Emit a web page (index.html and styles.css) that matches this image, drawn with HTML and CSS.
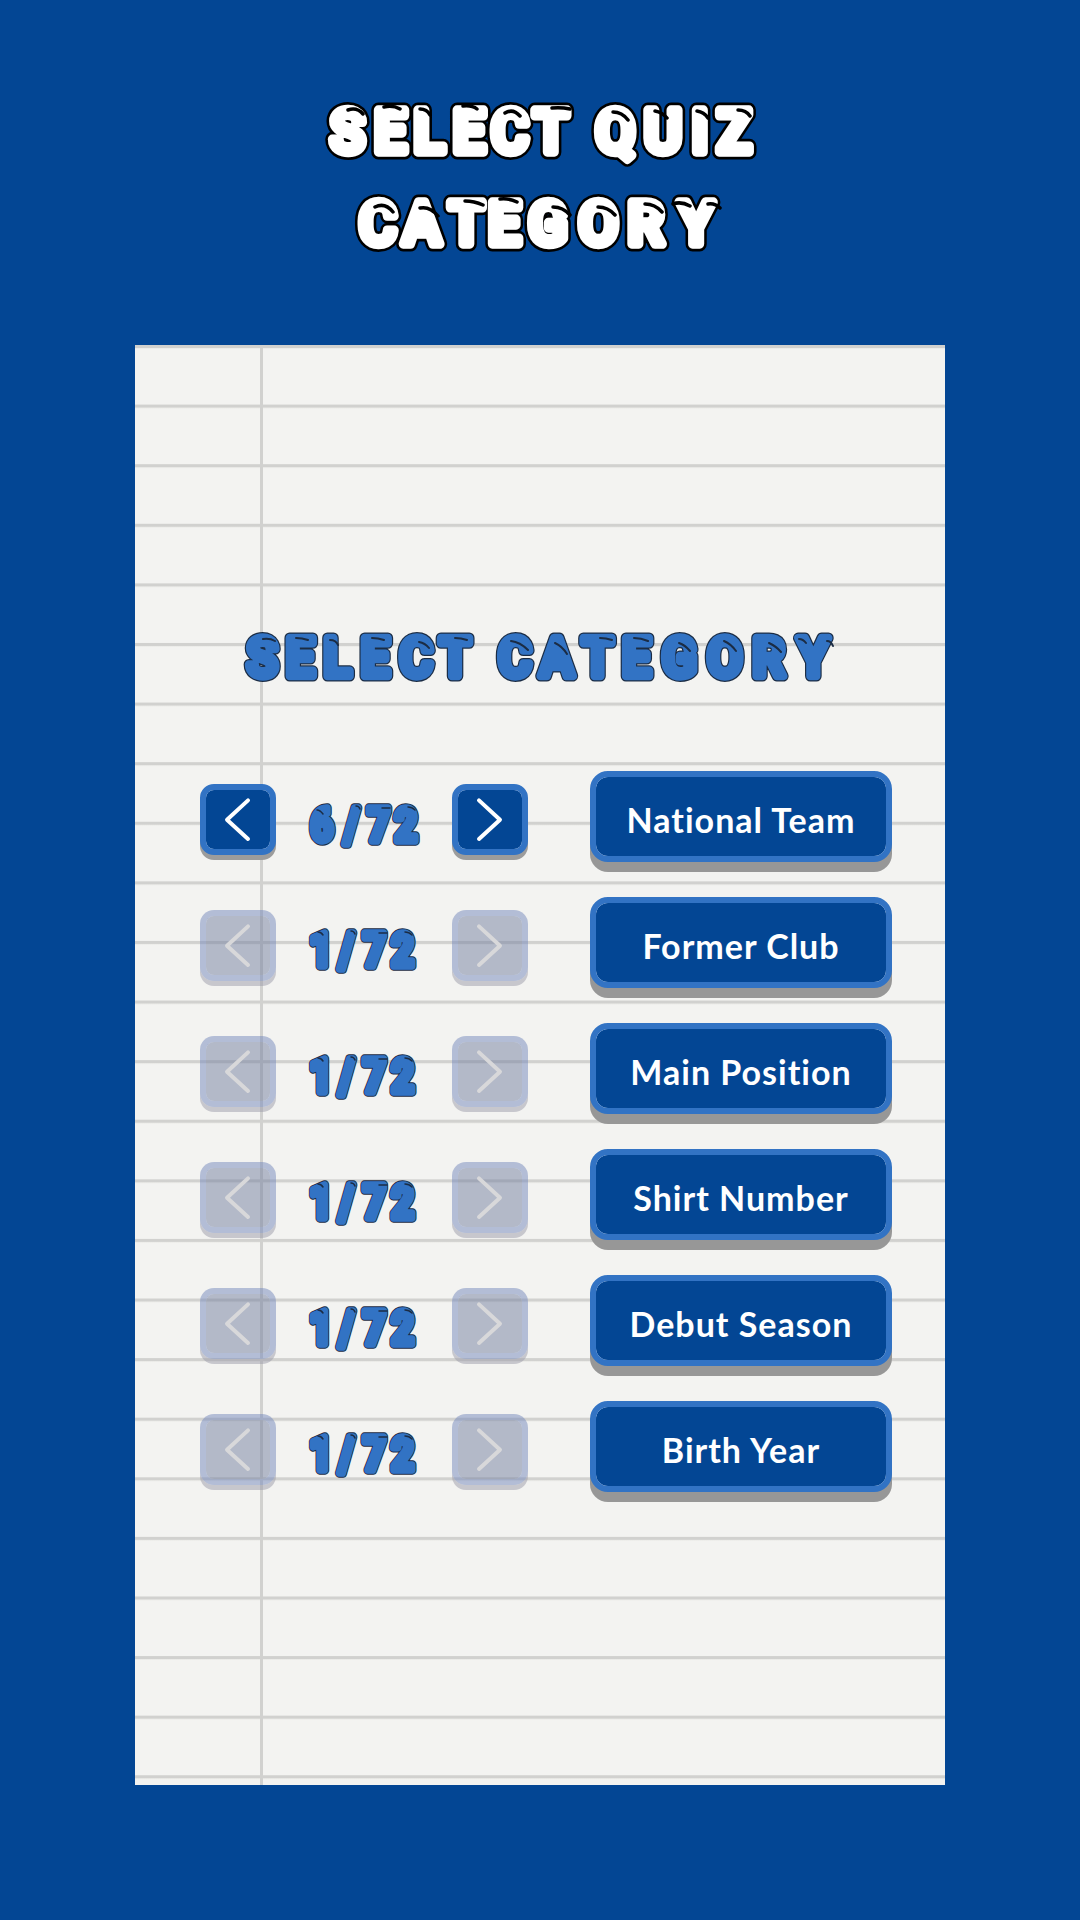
FILE: index.html
```html
<!DOCTYPE html>
<html lang="en">
<head>
<meta charset="utf-8">
<title>Select Quiz Category</title>
<link rel="stylesheet" href="styles.css">
</head>
<body>
<header class="top">
  <svg class="bubble title-svg" width="480" height="190" viewBox="0 0 480 190" aria-label="Select quiz category">
    <defs>
      <g id="title-text">
        <text class="scaled" x="50 95 136 178 221 264 298 332 382 421 457" y="72">SELECT QUIZ</text>
        <text class="scaled" x="82 128 175 215 261 314 364 417" y="164">CATEGORY</text>
      </g>
    </defs>
    <use href="#title-text" class="white-out"/>
    <use href="#title-text" class="white-in"/>
    <path class="gloss-title" d="M48 30q9-3 15 4M84 27q9-2 16 2M120 29q7 0 10 6M163 26q9-1 14 3M205 33q8-5 15 3M252 28q9-1 18 1M313 32q9 0 15 8M355 31q7 1 12 7M397 31q7 1 11 7M438 30q8 0 12 6M75 127q10-5 18 5M120 128q10-2 18 8M165 121q9 0 18 4M200 119q9-1 17 3M253 127q10 0 17 8M298 127q10 0 17 8M345 124q10 0 17 8M373 124q8-3 17 2M408 124q7-1 12 4"/>
  </svg>
</header>
<main class="paper">
  <svg class="bubble section-svg" width="630" height="90" viewBox="0 0 630 90" aria-label="Select category">
    <defs>
      <text id="section-text" class="scaled" x="34 74 113 153 196 237 269 300 344 387 428 473 521 567 614" y="66">SELECT CATEGORY</text>
    </defs>
    <use href="#section-text" class="blue-out"/>
    <use href="#section-text" class="blue-in"/>
    <path class="gloss-section" d="M33 29q7-1 12 2M66 28q6 0 12 2M100 30q6 0 8 5M142 28q6 0 12 2M189 32q6 1 10 6M225 28q6 0 12 2M281 31q9 1 17 9M325 33q7 3 12 11M370 28q6 0 12 2M404 28q7 0 14 3M449 33q6 2 11 8M494 31q7 3 12 10M539 33q7 3 12 9M569 29q4 0 7 4M597 31q4 0 6 5"/>
  </svg>
  <div class="rows">
    <div class="row">
      <button class="arrow"><svg width="64" height="59" viewBox="0 0 64 59"><path d="M42 10.4 21 29.7 42 49"/></svg></button>
      <svg class="bubble counter" width="120" height="60" viewBox="0 0 120 60">
        <defs><text id="c1" class="tight" x="21 56 88 120" y="48">6/72</text></defs>
        <use href="#c1" class="num-out"/><use href="#c1" class="num-in"/>
        <path class="gloss-num" d="M13 17q3 0 6 4M52 13q3 0 4 3M78 15h8M104 14q4 0 7 3"/>
      </svg>
      <button class="arrow"><svg width="64" height="59" viewBox="0 0 64 59"><path d="M21 10.4 42 29.7 21 49"/></svg></button>
      <button class="choice">National Team</button>
    </div>
    <div class="row">
      <button class="arrow off"><svg width="64" height="59" viewBox="0 0 64 59"><path d="M42 10.4 21 29.7 42 49"/></svg></button>
      <svg class="bubble counter" width="120" height="60" viewBox="0 0 120 60">
        <defs><text id="c2" class="tight" x="20 50 83 116" y="47">1/72</text></defs>
        <use href="#c2" class="num-out"/><use href="#c2" class="num-in"/>
        <path class="gloss-num" d="M14 13q3 0 5 3M47 12q3 0 4 3M75 14h8M101 13q4 0 7 3"/>
      </svg>
      <button class="arrow off"><svg width="64" height="59" viewBox="0 0 64 59"><path d="M21 10.4 42 29.7 21 49"/></svg></button>
      <button class="choice">Former Club</button>
    </div>
    <div class="row">
      <button class="arrow off"><svg width="64" height="59" viewBox="0 0 64 59"><path d="M42 10.4 21 29.7 42 49"/></svg></button>
      <svg class="bubble counter" width="120" height="60" viewBox="0 0 120 60">
        <defs><text id="c3" class="tight" x="20 50 83 116" y="47">1/72</text></defs>
        <use href="#c3" class="num-out"/><use href="#c3" class="num-in"/>
        <path class="gloss-num" d="M14 13q3 0 5 3M47 12q3 0 4 3M75 14h8M101 13q4 0 7 3"/>
      </svg>
      <button class="arrow off"><svg width="64" height="59" viewBox="0 0 64 59"><path d="M21 10.4 42 29.7 21 49"/></svg></button>
      <button class="choice">Main Position</button>
    </div>
    <div class="row">
      <button class="arrow off"><svg width="64" height="59" viewBox="0 0 64 59"><path d="M42 10.4 21 29.7 42 49"/></svg></button>
      <svg class="bubble counter" width="120" height="60" viewBox="0 0 120 60">
        <defs><text id="c4" class="tight" x="20 50 83 116" y="47">1/72</text></defs>
        <use href="#c4" class="num-out"/><use href="#c4" class="num-in"/>
        <path class="gloss-num" d="M14 13q3 0 5 3M47 12q3 0 4 3M75 14h8M101 13q4 0 7 3"/>
      </svg>
      <button class="arrow off"><svg width="64" height="59" viewBox="0 0 64 59"><path d="M21 10.4 42 29.7 21 49"/></svg></button>
      <button class="choice">Shirt Number</button>
    </div>
    <div class="row">
      <button class="arrow off"><svg width="64" height="59" viewBox="0 0 64 59"><path d="M42 10.4 21 29.7 42 49"/></svg></button>
      <svg class="bubble counter" width="120" height="60" viewBox="0 0 120 60">
        <defs><text id="c5" class="tight" x="20 50 83 116" y="47">1/72</text></defs>
        <use href="#c5" class="num-out"/><use href="#c5" class="num-in"/>
        <path class="gloss-num" d="M14 13q3 0 5 3M47 12q3 0 4 3M75 14h8M101 13q4 0 7 3"/>
      </svg>
      <button class="arrow off"><svg width="64" height="59" viewBox="0 0 64 59"><path d="M21 10.4 42 29.7 21 49"/></svg></button>
      <button class="choice">Debut Season</button>
    </div>
    <div class="row">
      <button class="arrow off"><svg width="64" height="59" viewBox="0 0 64 59"><path d="M42 10.4 21 29.7 42 49"/></svg></button>
      <svg class="bubble counter" width="120" height="60" viewBox="0 0 120 60">
        <defs><text id="c6" class="tight" x="20 50 83 116" y="47">1/72</text></defs>
        <use href="#c6" class="num-out"/><use href="#c6" class="num-in"/>
        <path class="gloss-num" d="M14 13q3 0 5 3M47 12q3 0 4 3M75 14h8M101 13q4 0 7 3"/>
      </svg>
      <button class="arrow off"><svg width="64" height="59" viewBox="0 0 64 59"><path d="M21 10.4 42 29.7 21 49"/></svg></button>
      <button class="choice">Birth Year</button>
    </div>
  </div>
</main>
</body>
</html>
```
FILE: styles.css
```css
* { box-sizing: border-box; }
html, body { margin: 0; padding: 0; }
body {
  width: 1080px;
  height: 1920px;
  overflow: hidden;
  background: #034694;
  font-family: "Lato", "Open Sans", sans-serif;
}
.top {
  height: 345px;
  padding-top: 80px;
  display: flex;
  justify-content: center;
  align-items: flex-start;
}
.paper {
  width: 810px;
  height: 1440px;
  margin: 0 auto;
  padding-top: 265px;
  display: flex;
  flex-direction: column;
  background-color: #f3f3f1;
  background-image:
    linear-gradient(to right, #d1d1cf 0, #d1d1cf 100%),
    linear-gradient(to bottom, #d1d1cf 0, #d1d1cf 2.6px, #ecece9 3.4px, #f3f3f1 4.4px);
  background-size: 3px 100%, 100% 59.6px;
  background-position: 124.5px 0, 0 0;
  background-repeat: no-repeat, repeat-y;
}
svg { display: block; overflow: visible; }
.section-svg { margin-left: 95px; }
.rows {
  margin-top: 71px;
  padding-left: 65px;
  display: flex;
  flex-direction: column;
  gap: 25px;
}
.row {
  display: flex;
  align-items: center;
  height: 101px;
}
.arrow {
  width: 76px;
  height: 71px;
  margin: 0 0 5px;
  padding: 0;
  display: flex;
  align-items: center;
  justify-content: center;
  background: #034694;
  background-clip: padding-box;
  border: 6px solid #3273c4;
  border-radius: 14px;
  box-shadow: 0 5px 0 #9c9c9c;
}
.arrow svg { fill: none; stroke: #fff; stroke-width: 4; stroke-linecap: round; stroke-linejoin: round; }
.arrow.off {
  background: rgba(116, 128, 160, .5);
  background-clip: padding-box;
  border-color: rgba(116, 136, 188, .5);
  box-shadow: 0 5px 0 rgba(156, 156, 170, .5);
}
.arrow.off svg { stroke: #d8d8da; }
.counter { margin: 2px 28px 0; flex: none; }
.choice {
  width: 302px;
  height: 91px;
  margin: 0 0 10px 62px;
  padding: 5px 0 0;
  background: #034694;
  background-clip: padding-box;
  border: 6px solid #3273c4;
  border-radius: 18px;
  box-shadow: 0 10px 0 #979797;
  color: #fff;
  font: 700 34px "Lato", "Open Sans", sans-serif;
  letter-spacing: 1px;
  text-align: center;
}
.bubble text {
  font-family: "Roboto", "Liberation Sans", sans-serif;
  font-weight: 500;
  text-anchor: middle;
}
.bubble text.scaled { transform: scaleX(.95); }
.bubble text.tight { transform: scaleX(.85); }
.bubble use { stroke-linejoin: round; stroke-linecap: round; }
.title-svg { font-size: 60px; }
.section-svg { font-size: 53px; }
.counter { font-size: 46px; }
.counter text { font-weight: 700; }
.white-out { stroke: #000; stroke-width: 15px; fill: #000; }
.white-in { stroke: #fff; stroke-width: 9.5px; fill: #fff; }
.blue-out { stroke: #1b2c44; stroke-width: 11px; fill: #1b2c44; }
.blue-in { stroke: #3273c4; stroke-width: 8.5px; fill: #3273c4; }
.num-out { stroke: #1b2c44; stroke-width: 9.5px; fill: #1b2c44; }
.num-in { stroke: #3273c4; stroke-width: 7.5px; fill: #3273c4; }
.gloss-title, .gloss-section, .gloss-num { fill: none; stroke-linecap: round; }
.gloss-title { stroke: #000; stroke-width: 3.5px; }
.gloss-section { stroke: #1b2c44; stroke-width: 2px; }
.gloss-num { stroke: #1b2c44; stroke-width: 1.5px; }
```
